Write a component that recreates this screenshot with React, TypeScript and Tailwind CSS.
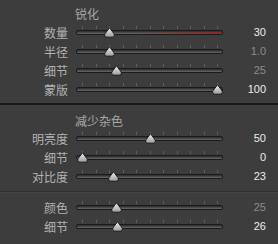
import React from "react";

type Row = {
  label: string;
  value: string;
  frac: number;
  dim?: boolean;
  red?: boolean;
};

const sharpen: Row[] = [
  { label: "数量", value: "30", frac: 0.2, red: true },
  { label: "半径", value: "1.0", frac: 0.2, dim: true },
  { label: "细节", value: "25", frac: 0.25, dim: true },
  { label: "蒙版", value: "100", frac: 1 },
];

const noise: Row[] = [
  { label: "明亮度", value: "50", frac: 0.5 },
  { label: "细节", value: "0", frac: 0 },
  { label: "对比度", value: "23", frac: 0.23 },
];

const color: Row[] = [
  { label: "颜色", value: "25", frac: 0.25, dim: true },
  { label: "细节", value: "26", frac: 0.26 },
];

const Thumb = () => (
  <svg width="13" height="11" viewBox="0 0 13 11" className="block">
    <defs>
      <linearGradient id="tg" x1="0" y1="0" x2="0" y2="1">
        <stop offset="0" stopColor="#f2f2f2" />
        <stop offset="1" stopColor="#9a9a9a" />
      </linearGradient>
    </defs>
    <path
      d="M6.5 0.8 L10.6 6.2 Q12 8 11 9.3 Q10.4 10.2 9 10.2 L4 10.2 Q2.6 10.2 2 9.3 Q1 8 2.4 6.2 Z"
      fill="url(#tg)"
      stroke="#1c1c1c"
      strokeWidth="1"
    />
  </svg>
);

const Slider = ({ row }: { row: Row }) => {
  const ticks = Array.from({ length: 11 }, (_, i) => 6 + 13.5 * i);
  const pos = 6 + 135 * row.frac;
  return (
    <div className="relative w-[147px] h-full">
      {ticks.map((t) => (
        <div
          key={t}
          className="absolute top-[3px] w-px h-[3px] bg-[#5c5c5c]"
          style={{ left: Math.round(t) }}
        />
      ))}
      <div className="absolute left-0 right-0 top-[7px] h-[5px] rounded-[2px] border border-[#1b1b1b] bg-gradient-to-b from-[#2a2a2a] to-[#6a6a6a]" />
      {row.red && (
        <div className="absolute left-[60px] right-[1px] top-[9px] h-[2px] bg-gradient-to-r from-transparent to-[#8a2a2a]" />
      )}
      <div className="absolute top-[4px]" style={{ left: Math.round(pos) - 6 }}>
        <Thumb />
      </div>
    </div>
  );
};

const SliderRow = ({ row }: { row: Row }) => (
  <div className="flex h-[19px] items-stretch">
    <div className="w-[68px] flex items-center justify-end text-[12px] text-[#b2b2b2]">
      {row.label}
    </div>
    <div className="ml-[8px]">
      <Slider row={row} />
    </div>
    <div
      className={`flex-1 flex items-center justify-end pr-[12px] text-[11px] font-['Liberation_Sans',sans-serif] ${
        row.dim ? "text-[#8c8c8c]" : "text-[#ececec]"
      }`}
    >
      {row.value}
    </div>
  </div>
);

export default function App() {
  return (
    <div className="w-[278px] h-[244px] bg-[#3d3d3d] font-['Noto_Sans_CJK_SC',sans-serif] overflow-hidden">
      <div className="pt-[4px]">
        <div className="h-[19px] pl-[75px] flex items-center text-[12px] text-[#a8a8a8]">
          锐化
        </div>
        {sharpen.map((r) => (
          <SliderRow key={r.label} row={r} />
        ))}
      </div>
      <div className="mt-[4px] h-[2px] bg-[#1a1a1a]" />
      <div className="pt-[7px]">
        <div className="h-[17px] pl-[75px] flex items-center text-[12px] text-[#a8a8a8]">
          减少杂色
        </div>
        {noise.map((r) => (
          <SliderRow key={r.label} row={r} />
        ))}
      </div>
      <div className="mt-[5px] h-px bg-[#303030]" />
      <div className="h-px bg-[#454545]" />
      <div className="pt-[5px]">
        {color.map((r) => (
          <SliderRow key={r.label} row={r} />
        ))}
      </div>
    </div>
  );
}
